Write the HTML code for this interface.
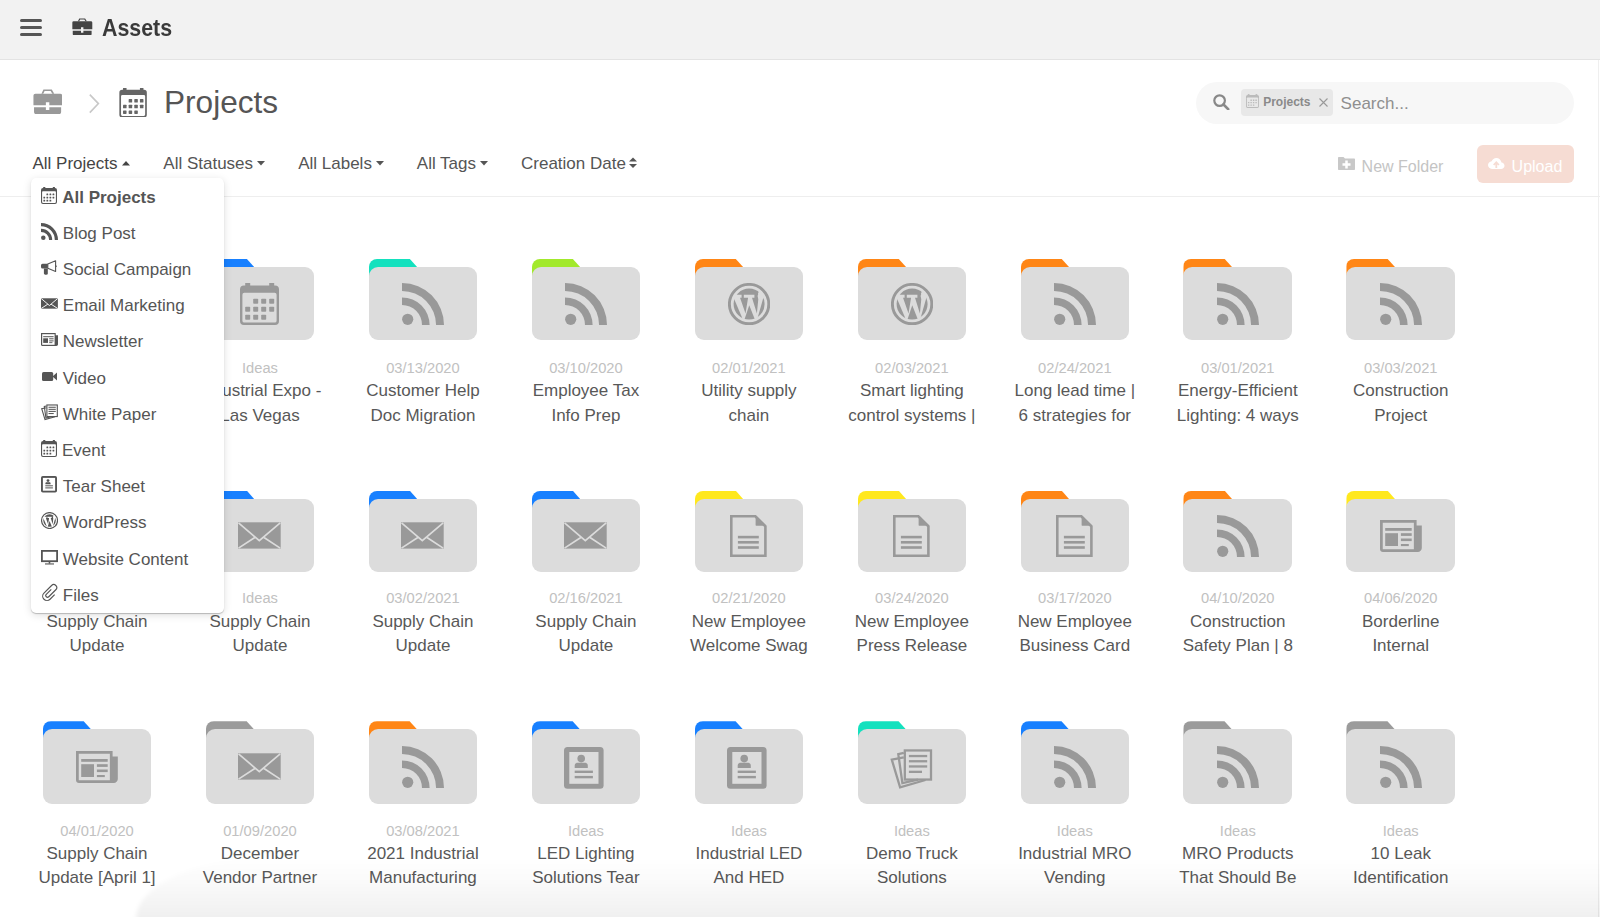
<!DOCTYPE html>
<html><head><meta charset="utf-8"><style>
*{margin:0;padding:0;box-sizing:border-box}
html,body{width:1600px;height:917px;overflow:hidden;background:#fff;font-family:"Liberation Sans",sans-serif;color:#555}
.abs{position:absolute}
#hdr{position:absolute;left:0;top:0;width:1600px;height:60px;background:#f2f2f2;border-bottom:1px solid #e3e3e3}
.it{position:absolute;width:108.6px;height:90px}
.tab{position:absolute;left:0;top:0;width:48.5px;height:20px;border-top-left-radius:8px;clip-path:polygon(0 0,41px 0,48.5px 8.3px,48.5px 100%,0 100%)}
.body{position:absolute;left:0;top:8.3px;width:108.6px;background:#dcdcdc;border-radius:9px}
.ic{position:absolute;line-height:0}
.ic svg{display:block}
.date{position:absolute;width:163px;text-align:center;font-size:14.7px;color:#c1c1c1;line-height:18px}
.title{position:absolute;width:163px;text-align:center;font-size:17px;color:#585858;line-height:24.4px}
</style></head><body>

<div id="hdr"></div>
<div class="abs" style="left:20px;top:19px;width:22.4px;height:3px;border-radius:1.5px;background:#555"></div>
<div class="abs" style="left:20px;top:25.8px;width:22.4px;height:3px;border-radius:1.5px;background:#555"></div>
<div class="abs" style="left:20px;top:32.9px;width:22.4px;height:3px;border-radius:1.5px;background:#555"></div>
<div class="abs" style="left:72.4px;top:17.6px;line-height:0"><svg width="20.6" height="17.8" viewBox="0 0 30 26"><path d="M8.6 4.8L10.6 0.6H19.1L21.6 4.8H19.6L18 2.1H11.8L10.4 4.8Z" fill="#444"/><path d="M2.5 4.7H27.6A2 2 0 0 1 29.6 6.7V16.5H16.6V13.4H13.1V16.5H0.45V6.7A2 2 0 0 1 2.45 4.7Z" fill="#444"/><path d="M1.05 18.5H13.1V21.4H16.6V18.5H28.6V23.3A2.3 2.3 0 0 1 26.3 25.6H3.35A2.3 2.3 0 0 1 1.05 23.3Z" fill="#444"/></svg></div>
<div class="abs" style="left:101.5px;top:16.33px;font-size:24.3px;line-height:24.3px;color:#3a3a3a;font-weight:bold;white-space:nowrap;transform:scaleX(0.88);transform-origin:0 0">Assets</div>
<div class="abs" style="left:32.7px;top:88.5px;line-height:0"><svg width="29.5" height="25.6" viewBox="0 0 30 26"><path d="M8.6 4.8L10.6 0.6H19.1L21.6 4.8H19.6L18 2.1H11.8L10.4 4.8Z" fill="#999"/><path d="M2.5 4.7H27.6A2 2 0 0 1 29.6 6.7V16.5H16.6V13.4H13.1V16.5H0.45V6.7A2 2 0 0 1 2.45 4.7Z" fill="#999"/><path d="M1.05 18.5H13.1V21.4H16.6V18.5H28.6V23.3A2.3 2.3 0 0 1 26.3 25.6H3.35A2.3 2.3 0 0 1 1.05 23.3Z" fill="#999"/></svg></div>
<svg class="abs" style="left:88px;top:93px" width="13" height="21" viewBox="0 0 13 21"><path d="M1.8 1.6L10.4 10.6L1.8 19.6" fill="none" stroke="#c8c8c8" stroke-width="1.6"/></svg>
<div class="abs" style="left:118.7px;top:87.7px;line-height:0"><svg width="28.2" height="29.6" viewBox="0 0 39 42"><rect x="5.2" y="0" width="5" height="5" fill="#666"/><rect x="29.2" y="0" width="5" height="5" fill="#666"/><path d="M4 2.6H35A4 4 0 0 1 39 6.6V38A4 4 0 0 1 35 42H4A4 4 0 0 1 0 38V6.6A4 4 0 0 1 4 2.6Z" fill="#666"/><path d="M4.5 9.8H34.5A2 2 0 0 1 36.6 11.8V37.5A2 2 0 0 1 34.5 39.6H4.5A2 2 0 0 1 2.4 37.5V11.8A2 2 0 0 1 4.5 9.8Z" fill="#fff"/><rect x="13.2" y="15.7" width="5" height="5" rx="0.8" fill="#666"/><rect x="21.2" y="15.7" width="5" height="5" rx="0.8" fill="#666"/><rect x="29.2" y="15.7" width="5" height="5" rx="0.8" fill="#666"/><rect x="5.2" y="23.7" width="5" height="5" rx="0.8" fill="#666"/><rect x="13.2" y="23.7" width="5" height="5" rx="0.8" fill="#666"/><rect x="21.2" y="23.7" width="5" height="5" rx="0.8" fill="#666"/><rect x="29.2" y="23.7" width="5" height="5" rx="0.8" fill="#666"/><rect x="5.2" y="31.8" width="5" height="5" rx="0.8" fill="#666"/><rect x="13.2" y="31.8" width="5" height="5" rx="0.8" fill="#666"/><rect x="21.2" y="31.8" width="5" height="5" rx="0.8" fill="#666"/></svg></div>
<div class="abs" style="left:164px;top:86.75px;font-size:31.6px;line-height:31.6px;color:#555;font-weight:normal;white-space:nowrap;">Projects</div>
<div class="abs" style="left:32.5px;top:155.26px;font-size:17px;line-height:17px;color:#444;font-weight:normal;white-space:nowrap;">All Projects</div>
<div class="abs" style="left:122px;top:160.5px;line-height:0"><svg width="8" height="5" viewBox="0 0 8 5"><path d="M0 4.5H8L4 0Z" fill="#444"/></svg></div>
<div class="abs" style="left:163.3px;top:155.26px;font-size:17px;line-height:17px;color:#555;font-weight:normal;white-space:nowrap;">All Statuses</div>
<div class="abs" style="left:256.6px;top:161px;line-height:0"><svg width="8" height="5" viewBox="0 0 8 5"><path d="M0 0H8L4 4.5Z" fill="#555"/></svg></div>
<div class="abs" style="left:298.2px;top:155.26px;font-size:17px;line-height:17px;color:#555;font-weight:normal;white-space:nowrap;">All Labels</div>
<div class="abs" style="left:376px;top:161px;line-height:0"><svg width="8" height="5" viewBox="0 0 8 5"><path d="M0 0H8L4 4.5Z" fill="#555"/></svg></div>
<div class="abs" style="left:416.8px;top:155.26px;font-size:17px;line-height:17px;color:#555;font-weight:normal;white-space:nowrap;">All Tags</div>
<div class="abs" style="left:480px;top:161px;line-height:0"><svg width="8" height="5" viewBox="0 0 8 5"><path d="M0 0H8L4 4.5Z" fill="#555"/></svg></div>
<div class="abs" style="left:521px;top:155.26px;font-size:17px;line-height:17px;color:#555;font-weight:normal;white-space:nowrap;">Creation Date</div>
<svg class="abs" style="left:629px;top:156px" width="8" height="14" viewBox="0 0 8 14"><path d="M0 5.5H8L4 1.5Z M0 8H8L4 12Z" fill="#555"/></svg>
<div class="abs" style="left:0;top:196px;width:1600px;height:1px;background:#eeeeee"></div>
<div class="abs" style="left:1196px;top:82px;width:378px;height:41.5px;border-radius:21px;background:#f7f7f7"></div>
<svg class="abs" style="left:1212.5px;top:94px" width="17" height="16" viewBox="0 0 17 16"><circle cx="6.6" cy="6.6" r="5.3" fill="none" stroke="#888" stroke-width="2.2"/><path d="M10.5 10.5L15.2 15.2" stroke="#888" stroke-width="2.6" stroke-linecap="round"/></svg>
<div class="abs" style="left:1241px;top:88.5px;width:91.5px;height:27.8px;border-radius:4px;background:#e8e8e8"></div>
<div class="abs" style="left:1245.8px;top:93.7px;line-height:0"><svg width="13" height="14" viewBox="0 0 16 17"><rect x="2.2" y="0" width="2.1" height="2" fill="#bbb"/><rect x="11.8" y="0" width="2.1" height="2" fill="#bbb"/><path d="M2 1.1H14A2 2 0 0 1 16 3.1V15A2 2 0 0 1 14 17H2A2 2 0 0 1 0 15V3.1A2 2 0 0 1 2 1.1Z" fill="#bbb"/><rect x="1.1" y="4.2" width="13.8" height="11.7" rx="0.8" fill="#e8e8e8"/><rect x="5.45" y="6.60" width="1.75" height="1.75" rx="0.3" fill="#bbb"/><rect x="8.50" y="6.60" width="1.75" height="1.75" rx="0.3" fill="#bbb"/><rect x="11.55" y="6.60" width="1.75" height="1.75" rx="0.3" fill="#bbb"/><rect x="2.40" y="9.65" width="1.75" height="1.75" rx="0.3" fill="#bbb"/><rect x="5.45" y="9.65" width="1.75" height="1.75" rx="0.3" fill="#bbb"/><rect x="8.50" y="9.65" width="1.75" height="1.75" rx="0.3" fill="#bbb"/><rect x="11.55" y="9.65" width="1.75" height="1.75" rx="0.3" fill="#bbb"/><rect x="2.40" y="12.70" width="1.75" height="1.75" rx="0.3" fill="#bbb"/><rect x="5.45" y="12.70" width="1.75" height="1.75" rx="0.3" fill="#bbb"/><rect x="8.50" y="12.70" width="1.75" height="1.75" rx="0.3" fill="#bbb"/></svg></div>
<div class="abs" style="left:1263.2px;top:96.49px;font-size:12px;line-height:12px;color:#8a8a8a;font-weight:bold;white-space:nowrap;">Projects</div>
<svg class="abs" style="left:1318.5px;top:98px" width="9" height="9" viewBox="0 0 9 9"><path d="M0.5 0.5L8.5 8.5M8.5 0.5L0.5 8.5" stroke="#999" stroke-width="1.1"/></svg>
<div class="abs" style="left:1340.6px;top:95.11px;font-size:17px;line-height:17px;color:#8f8f8f;font-weight:normal;white-space:nowrap;">Search...</div>
<svg class="abs" style="left:1338px;top:156.5px" width="17" height="13" viewBox="0 0 17 13"><path d="M0 1C0 0.4 0.4 0 1 0H5.5L7 1.6H16C16.6 1.6 17 2 17 2.6V12C17 12.6 16.6 13 16 13H1C0.4 13 0 12.6 0 12Z" fill="#c8c8c8"/><path d="M8.5 3.6V11.6M4.5 7.6H12.5" stroke="#fff" stroke-width="2.5"/></svg>
<div class="abs" style="left:1361.6px;top:158.76px;font-size:16px;line-height:16px;color:#c4c4c4;font-weight:normal;white-space:nowrap;">New Folder</div>
<div class="abs" style="left:1477.2px;top:145.2px;width:97px;height:38px;border-radius:6px;background:#f6dcd3"></div>
<svg class="abs" style="left:1488px;top:157.5px" width="16.5" height="11" viewBox="0 0 16.5 11"><path d="M4 11H13C15 11 16.5 9.6 16.5 7.7C16.5 6 15.2 4.6 13.5 4.5C13 2 10.9 0 8.3 0C6.2 0 4.4 1.3 3.7 3.2C1.6 3.4 0 5.1 0 7.1C0 9.3 1.8 11 4 11Z" fill="#fff"/><path d="M8.3 10V4.6M5.7 7L8.3 4.2L10.9 7" stroke="#f6dcd3" stroke-width="1.8" fill="none"/></svg>
<div class="abs" style="left:1511.6px;top:159.11px;font-size:16px;line-height:16px;color:#fff;font-weight:normal;white-space:nowrap;">Upload</div>

<div class="it" style="left:205.67px;top:258.70px">
<div class="tab" style="background:#1880ff"></div><div class="body" style="height:73.45px"><div class="ic" style="left:34.80px;top:15.73px"><svg width="39" height="42" viewBox="0 0 39 42"><rect x="5.2" y="0" width="5" height="5" fill="#999"/><rect x="29.2" y="0" width="5" height="5" fill="#999"/><path d="M4 2.6H35A4 4 0 0 1 39 6.6V38A4 4 0 0 1 35 42H4A4 4 0 0 1 0 38V6.6A4 4 0 0 1 4 2.6Z" fill="#999"/><path d="M4.5 9.8H34.5A2 2 0 0 1 36.6 11.8V37.5A2 2 0 0 1 34.5 39.6H4.5A2 2 0 0 1 2.4 37.5V11.8A2 2 0 0 1 4.5 9.8Z" fill="#dcdcdc"/><rect x="13.2" y="15.7" width="5" height="5" rx="0.8" fill="#999"/><rect x="21.2" y="15.7" width="5" height="5" rx="0.8" fill="#999"/><rect x="29.2" y="15.7" width="5" height="5" rx="0.8" fill="#999"/><rect x="5.2" y="23.7" width="5" height="5" rx="0.8" fill="#999"/><rect x="13.2" y="23.7" width="5" height="5" rx="0.8" fill="#999"/><rect x="21.2" y="23.7" width="5" height="5" rx="0.8" fill="#999"/><rect x="29.2" y="23.7" width="5" height="5" rx="0.8" fill="#999"/><rect x="5.2" y="31.8" width="5" height="5" rx="0.8" fill="#999"/><rect x="13.2" y="31.8" width="5" height="5" rx="0.8" fill="#999"/><rect x="21.2" y="31.8" width="5" height="5" rx="0.8" fill="#999"/></svg></div></div>
</div>
<div class="date" style="left:178.47px;top:358.95px">Ideas</div><div class="title" style="left:178.47px;top:379.45px">Industrial Expo -<br>Las Vegas</div><div class="it" style="left:368.64px;top:258.70px">
<div class="tab" style="background:#14e1be"></div><div class="body" style="height:73.45px"><div class="ic" style="left:33.30px;top:15.73px"><svg width="42" height="42" viewBox="0 0 42 42"><circle cx="5.7" cy="36.3" r="5.6" fill="#999"/><path d="M0 14.4A27.6 27.6 0 0 1 27.6 42H20A20 20 0 0 0 0 22Z" fill="#999"/><path d="M0 0A42 42 0 0 1 42 42H34.1A34.1 34.1 0 0 0 0 7.9Z" fill="#999"/></svg></div></div>
</div>
<div class="date" style="left:341.44px;top:358.95px">03/13/2020</div><div class="title" style="left:341.44px;top:379.45px">Customer Help<br>Doc Migration</div><div class="it" style="left:531.61px;top:258.70px">
<div class="tab" style="background:#a2e92c"></div><div class="body" style="height:73.45px"><div class="ic" style="left:33.30px;top:15.73px"><svg width="42" height="42" viewBox="0 0 42 42"><circle cx="5.7" cy="36.3" r="5.6" fill="#999"/><path d="M0 14.4A27.6 27.6 0 0 1 27.6 42H20A20 20 0 0 0 0 22Z" fill="#999"/><path d="M0 0A42 42 0 0 1 42 42H34.1A34.1 34.1 0 0 0 0 7.9Z" fill="#999"/></svg></div></div>
</div>
<div class="date" style="left:504.41px;top:358.95px">03/10/2020</div><div class="title" style="left:504.41px;top:379.45px">Employee Tax<br>Info Prep</div><div class="it" style="left:694.58px;top:258.70px">
<div class="tab" style="background:#ff8616"></div><div class="body" style="height:73.45px"><div class="ic" style="left:33.30px;top:15.73px"><svg width="42" height="42" viewBox="0 0 42 42"><defs><clipPath id="wpc1"><circle cx="21.1" cy="21.1" r="15.5"/></clipPath></defs><circle cx="21.1" cy="21.1" r="19.7" stroke="#999" stroke-width="2.9" fill="none"/><g clip-path="url(#wpc1)" fill="#999"><path d="M0 0H42V7L30.8 8.6L29.6 11.8H0Z"/><path d="M0 8H2.82L17.18 42H0Z"/><path d="M12.03 14.74H13.6V11H15.8V14.74H20.07L17.52 30.44Z"/><path d="M21.25 22.2L29.06 42H14.64Z"/><path d="M24 14.74H26.4V11H30.2L29.6 13L30.28 16.31L28.9 30.44Z"/><path d="M37.32 8H42V42H27.59Z"/></g></svg></div></div>
</div>
<div class="date" style="left:667.38px;top:358.95px">02/01/2021</div><div class="title" style="left:667.38px;top:379.45px">Utility supply<br>chain</div><div class="it" style="left:857.55px;top:258.70px">
<div class="tab" style="background:#ff8616"></div><div class="body" style="height:73.45px"><div class="ic" style="left:33.30px;top:15.73px"><svg width="42" height="42" viewBox="0 0 42 42"><defs><clipPath id="wpc2"><circle cx="21.1" cy="21.1" r="15.5"/></clipPath></defs><circle cx="21.1" cy="21.1" r="19.7" stroke="#999" stroke-width="2.9" fill="none"/><g clip-path="url(#wpc2)" fill="#999"><path d="M0 0H42V7L30.8 8.6L29.6 11.8H0Z"/><path d="M0 8H2.82L17.18 42H0Z"/><path d="M12.03 14.74H13.6V11H15.8V14.74H20.07L17.52 30.44Z"/><path d="M21.25 22.2L29.06 42H14.64Z"/><path d="M24 14.74H26.4V11H30.2L29.6 13L30.28 16.31L28.9 30.44Z"/><path d="M37.32 8H42V42H27.59Z"/></g></svg></div></div>
</div>
<div class="date" style="left:830.35px;top:358.95px">02/03/2021</div><div class="title" style="left:830.35px;top:379.45px">Smart lighting<br>control systems |</div><div class="it" style="left:1020.52px;top:258.70px">
<div class="tab" style="background:#ff8616"></div><div class="body" style="height:73.45px"><div class="ic" style="left:33.30px;top:15.73px"><svg width="42" height="42" viewBox="0 0 42 42"><circle cx="5.7" cy="36.3" r="5.6" fill="#999"/><path d="M0 14.4A27.6 27.6 0 0 1 27.6 42H20A20 20 0 0 0 0 22Z" fill="#999"/><path d="M0 0A42 42 0 0 1 42 42H34.1A34.1 34.1 0 0 0 0 7.9Z" fill="#999"/></svg></div></div>
</div>
<div class="date" style="left:993.32px;top:358.95px">02/24/2021</div><div class="title" style="left:993.32px;top:379.45px">Long lead time |<br>6 strategies for</div><div class="it" style="left:1183.49px;top:258.70px">
<div class="tab" style="background:#ff8616"></div><div class="body" style="height:73.45px"><div class="ic" style="left:33.30px;top:15.73px"><svg width="42" height="42" viewBox="0 0 42 42"><circle cx="5.7" cy="36.3" r="5.6" fill="#999"/><path d="M0 14.4A27.6 27.6 0 0 1 27.6 42H20A20 20 0 0 0 0 22Z" fill="#999"/><path d="M0 0A42 42 0 0 1 42 42H34.1A34.1 34.1 0 0 0 0 7.9Z" fill="#999"/></svg></div></div>
</div>
<div class="date" style="left:1156.29px;top:358.95px">03/01/2021</div><div class="title" style="left:1156.29px;top:379.45px">Energy-Efficient<br>Lighting: 4 ways</div><div class="it" style="left:1346.46px;top:258.70px">
<div class="tab" style="background:#ff8616"></div><div class="body" style="height:73.45px"><div class="ic" style="left:33.30px;top:15.73px"><svg width="42" height="42" viewBox="0 0 42 42"><circle cx="5.7" cy="36.3" r="5.6" fill="#999"/><path d="M0 14.4A27.6 27.6 0 0 1 27.6 42H20A20 20 0 0 0 0 22Z" fill="#999"/><path d="M0 0A42 42 0 0 1 42 42H34.1A34.1 34.1 0 0 0 0 7.9Z" fill="#999"/></svg></div></div>
</div>
<div class="date" style="left:1319.26px;top:358.95px">03/03/2021</div><div class="title" style="left:1319.26px;top:379.45px">Construction<br>Project</div><div class="it" style="left:42.70px;top:490.60px">
<div class="tab" style="background:#1880ff"></div><div class="body" style="height:73.25px"><div class="ic" style="left:32.80px;top:23.12px"><svg width="43" height="27" viewBox="0 0 43 27"><rect x="0" y="0.3" width="42.7" height="26.3" fill="#999"/><path d="M0.5 0.8L21.3 18.6L42.2 0.8M0.5 26.1L17.2 15.3M42.2 26.1L25.6 15.3" stroke="#dcdcdc" stroke-width="1.7" fill="none"/></svg></div></div>
</div>
<div class="date" style="left:15.50px;top:589.45px">Ideas</div><div class="title" style="left:15.50px;top:609.95px">Supply Chain<br>Update</div><div class="it" style="left:205.67px;top:490.60px">
<div class="tab" style="background:#1880ff"></div><div class="body" style="height:73.25px"><div class="ic" style="left:32.80px;top:23.12px"><svg width="43" height="27" viewBox="0 0 43 27"><rect x="0" y="0.3" width="42.7" height="26.3" fill="#999"/><path d="M0.5 0.8L21.3 18.6L42.2 0.8M0.5 26.1L17.2 15.3M42.2 26.1L25.6 15.3" stroke="#dcdcdc" stroke-width="1.7" fill="none"/></svg></div></div>
</div>
<div class="date" style="left:178.47px;top:589.45px">Ideas</div><div class="title" style="left:178.47px;top:609.95px">Supply Chain<br>Update</div><div class="it" style="left:368.64px;top:490.60px">
<div class="tab" style="background:#1880ff"></div><div class="body" style="height:73.25px"><div class="ic" style="left:32.80px;top:23.12px"><svg width="43" height="27" viewBox="0 0 43 27"><rect x="0" y="0.3" width="42.7" height="26.3" fill="#999"/><path d="M0.5 0.8L21.3 18.6L42.2 0.8M0.5 26.1L17.2 15.3M42.2 26.1L25.6 15.3" stroke="#dcdcdc" stroke-width="1.7" fill="none"/></svg></div></div>
</div>
<div class="date" style="left:341.44px;top:589.45px">03/02/2021</div><div class="title" style="left:341.44px;top:609.95px">Supply Chain<br>Update</div><div class="it" style="left:531.61px;top:490.60px">
<div class="tab" style="background:#1880ff"></div><div class="body" style="height:73.25px"><div class="ic" style="left:32.80px;top:23.12px"><svg width="43" height="27" viewBox="0 0 43 27"><rect x="0" y="0.3" width="42.7" height="26.3" fill="#999"/><path d="M0.5 0.8L21.3 18.6L42.2 0.8M0.5 26.1L17.2 15.3M42.2 26.1L25.6 15.3" stroke="#dcdcdc" stroke-width="1.7" fill="none"/></svg></div></div>
</div>
<div class="date" style="left:504.41px;top:589.45px">02/16/2021</div><div class="title" style="left:504.41px;top:609.95px">Supply Chain<br>Update</div><div class="it" style="left:694.58px;top:490.60px">
<div class="tab" style="background:#ffe81e"></div><div class="body" style="height:73.25px"><div class="ic" style="left:35.80px;top:15.62px"><svg width="37" height="42" viewBox="0 0 37 42"><path d="M1.3 1.3H25.4L35.4 11.3V40.7H1.3Z" stroke="#999" stroke-width="2.6" fill="none"/><path d="M26 1.3V10.5H35.4" fill="#999"/><path d="M25.6 0.5V10.6H36.2Z" fill="#999"/><rect x="7.9" y="20.8" width="20.9" height="2.6" fill="#999"/><rect x="7.9" y="26" width="20.9" height="2.6" fill="#999"/><rect x="7.9" y="31.2" width="20.9" height="2.6" fill="#999"/></svg></div></div>
</div>
<div class="date" style="left:667.38px;top:589.45px">02/21/2020</div><div class="title" style="left:667.38px;top:609.95px">New Employee<br>Welcome Swag</div><div class="it" style="left:857.55px;top:490.60px">
<div class="tab" style="background:#ffe81e"></div><div class="body" style="height:73.25px"><div class="ic" style="left:35.80px;top:15.62px"><svg width="37" height="42" viewBox="0 0 37 42"><path d="M1.3 1.3H25.4L35.4 11.3V40.7H1.3Z" stroke="#999" stroke-width="2.6" fill="none"/><path d="M26 1.3V10.5H35.4" fill="#999"/><path d="M25.6 0.5V10.6H36.2Z" fill="#999"/><rect x="7.9" y="20.8" width="20.9" height="2.6" fill="#999"/><rect x="7.9" y="26" width="20.9" height="2.6" fill="#999"/><rect x="7.9" y="31.2" width="20.9" height="2.6" fill="#999"/></svg></div></div>
</div>
<div class="date" style="left:830.35px;top:589.45px">03/24/2020</div><div class="title" style="left:830.35px;top:609.95px">New Employee<br>Press Release</div><div class="it" style="left:1020.52px;top:490.60px">
<div class="tab" style="background:#ff8616"></div><div class="body" style="height:73.25px"><div class="ic" style="left:35.80px;top:15.62px"><svg width="37" height="42" viewBox="0 0 37 42"><path d="M1.3 1.3H25.4L35.4 11.3V40.7H1.3Z" stroke="#999" stroke-width="2.6" fill="none"/><path d="M26 1.3V10.5H35.4" fill="#999"/><path d="M25.6 0.5V10.6H36.2Z" fill="#999"/><rect x="7.9" y="20.8" width="20.9" height="2.6" fill="#999"/><rect x="7.9" y="26" width="20.9" height="2.6" fill="#999"/><rect x="7.9" y="31.2" width="20.9" height="2.6" fill="#999"/></svg></div></div>
</div>
<div class="date" style="left:993.32px;top:589.45px">03/17/2020</div><div class="title" style="left:993.32px;top:609.95px">New Employee<br>Business Card</div><div class="it" style="left:1183.49px;top:490.60px">
<div class="tab" style="background:#ff8616"></div><div class="body" style="height:73.25px"><div class="ic" style="left:33.30px;top:15.62px"><svg width="42" height="42" viewBox="0 0 42 42"><circle cx="5.7" cy="36.3" r="5.6" fill="#999"/><path d="M0 14.4A27.6 27.6 0 0 1 27.6 42H20A20 20 0 0 0 0 22Z" fill="#999"/><path d="M0 0A42 42 0 0 1 42 42H34.1A34.1 34.1 0 0 0 0 7.9Z" fill="#999"/></svg></div></div>
</div>
<div class="date" style="left:1156.29px;top:589.45px">04/10/2020</div><div class="title" style="left:1156.29px;top:609.95px">Construction<br>Safety Plan | 8</div><div class="it" style="left:1346.46px;top:490.60px">
<div class="tab" style="background:#ffe81e"></div><div class="body" style="height:73.25px"><div class="ic" style="left:33.30px;top:20.62px"><svg width="42" height="32" viewBox="0 0 42 32"><path d="M36.6 5.4H41.8V28C41.8 30.2 40 32 37.8 32H3C1.3 32 0 30.7 0 29V0H36.6Z" fill="#999"/><rect x="2.75" y="2.75" width="31.1" height="26.5" fill="#dcdcdc"/><rect x="5.2" y="8" width="26.5" height="2.8" fill="#999"/><rect x="5.2" y="13.2" width="12.8" height="12.8" fill="#999"/><rect x="20.9" y="13.2" width="10.8" height="2.7" fill="#999"/><rect x="20.9" y="18.5" width="10.8" height="2.6" fill="#999"/><rect x="20.9" y="24" width="7.9" height="2.1" fill="#999"/></svg></div></div>
</div>
<div class="date" style="left:1319.26px;top:589.45px">04/06/2020</div><div class="title" style="left:1319.26px;top:609.95px">Borderline<br>Internal</div><div class="it" style="left:42.70px;top:721.20px">
<div class="tab" style="background:#1880ff"></div><div class="body" style="height:74.6px"><div class="ic" style="left:33.30px;top:21.30px"><svg width="42" height="32" viewBox="0 0 42 32"><path d="M36.6 5.4H41.8V28C41.8 30.2 40 32 37.8 32H3C1.3 32 0 30.7 0 29V0H36.6Z" fill="#999"/><rect x="2.75" y="2.75" width="31.1" height="26.5" fill="#dcdcdc"/><rect x="5.2" y="8" width="26.5" height="2.8" fill="#999"/><rect x="5.2" y="13.2" width="12.8" height="12.8" fill="#999"/><rect x="20.9" y="13.2" width="10.8" height="2.7" fill="#999"/><rect x="20.9" y="18.5" width="10.8" height="2.6" fill="#999"/><rect x="20.9" y="24" width="7.9" height="2.1" fill="#999"/></svg></div></div>
</div>
<div class="date" style="left:15.50px;top:821.55px">04/01/2020</div><div class="title" style="left:15.50px;top:842.05px">Supply Chain<br>Update [April 1]</div><div class="it" style="left:205.67px;top:721.20px">
<div class="tab" style="background:#9b9b9b"></div><div class="body" style="height:74.6px"><div class="ic" style="left:32.80px;top:23.80px"><svg width="43" height="27" viewBox="0 0 43 27"><rect x="0" y="0.3" width="42.7" height="26.3" fill="#999"/><path d="M0.5 0.8L21.3 18.6L42.2 0.8M0.5 26.1L17.2 15.3M42.2 26.1L25.6 15.3" stroke="#dcdcdc" stroke-width="1.7" fill="none"/></svg></div></div>
</div>
<div class="date" style="left:178.47px;top:821.55px">01/09/2020</div><div class="title" style="left:178.47px;top:842.05px">December<br>Vendor Partner</div><div class="it" style="left:368.64px;top:721.20px">
<div class="tab" style="background:#ff8616"></div><div class="body" style="height:74.6px"><div class="ic" style="left:33.30px;top:16.30px"><svg width="42" height="42" viewBox="0 0 42 42"><circle cx="5.7" cy="36.3" r="5.6" fill="#999"/><path d="M0 14.4A27.6 27.6 0 0 1 27.6 42H20A20 20 0 0 0 0 22Z" fill="#999"/><path d="M0 0A42 42 0 0 1 42 42H34.1A34.1 34.1 0 0 0 0 7.9Z" fill="#999"/></svg></div></div>
</div>
<div class="date" style="left:341.44px;top:821.55px">03/08/2021</div><div class="title" style="left:341.44px;top:842.05px">2021 Industrial<br>Manufacturing</div><div class="it" style="left:531.61px;top:721.20px">
<div class="tab" style="background:#1880ff"></div><div class="body" style="height:74.6px"><div class="ic" style="left:32.80px;top:17.20px"><svg width="40" height="42" viewBox="0 0 40 42"><rect x="0" y="0" width="39.6" height="41.8" rx="3.5" fill="#999"/><rect x="5.3" y="5" width="29.2" height="31.8" fill="#dcdcdc"/><circle cx="17.2" cy="11.6" r="3.8" fill="#999"/><path d="M10.7 21V18.5C10.7 16.8 12 15.8 13.7 15.8H20.8C22.5 15.8 23.8 16.8 23.8 18.5V21Z" fill="#999"/><rect x="10.7" y="23.6" width="18.2" height="2.4" fill="#999"/><rect x="10.7" y="28.9" width="18.2" height="2.4" fill="#999"/></svg></div></div>
</div>
<div class="date" style="left:504.41px;top:821.55px">Ideas</div><div class="title" style="left:504.41px;top:842.05px">LED Lighting<br>Solutions Tear</div><div class="it" style="left:694.58px;top:721.20px">
<div class="tab" style="background:#1880ff"></div><div class="body" style="height:74.6px"><div class="ic" style="left:32.80px;top:17.20px"><svg width="40" height="42" viewBox="0 0 40 42"><rect x="0" y="0" width="39.6" height="41.8" rx="3.5" fill="#999"/><rect x="5.3" y="5" width="29.2" height="31.8" fill="#dcdcdc"/><circle cx="17.2" cy="11.6" r="3.8" fill="#999"/><path d="M10.7 21V18.5C10.7 16.8 12 15.8 13.7 15.8H20.8C22.5 15.8 23.8 16.8 23.8 18.5V21Z" fill="#999"/><rect x="10.7" y="23.6" width="18.2" height="2.4" fill="#999"/><rect x="10.7" y="28.9" width="18.2" height="2.4" fill="#999"/></svg></div></div>
</div>
<div class="date" style="left:667.38px;top:821.55px">Ideas</div><div class="title" style="left:667.38px;top:842.05px">Industrial LED<br>And HED</div><div class="it" style="left:857.55px;top:721.20px">
<div class="tab" style="background:#14e1be"></div><div class="body" style="height:74.6px"><div class="ic" style="left:31.30px;top:15.30px"><svg width="46" height="46" viewBox="-2 -2 46 46"><g fill="none" stroke="#999" stroke-width="2.3" stroke-linejoin="miter"><path d="M12.8 10.3L0.8 12.7L9.1 40.3L34.5 33"/><path d="M12.8 5.9L7.3 7.2L11.4 36.1L27 32.6"/><rect x="13.83" y="3.45" width="26.17" height="29.1"/></g><rect x="17.9" y="7.9" width="18.3" height="2.3" fill="#999"/><rect x="17.9" y="13.1" width="18.3" height="2.3" fill="#999"/><rect x="17.9" y="18.3" width="18.3" height="2.3" fill="#999"/><rect x="17.9" y="23.7" width="13.1" height="2.3" fill="#999"/></svg></div></div>
</div>
<div class="date" style="left:830.35px;top:821.55px">Ideas</div><div class="title" style="left:830.35px;top:842.05px">Demo Truck<br>Solutions</div><div class="it" style="left:1020.52px;top:721.20px">
<div class="tab" style="background:#1880ff"></div><div class="body" style="height:74.6px"><div class="ic" style="left:33.30px;top:16.30px"><svg width="42" height="42" viewBox="0 0 42 42"><circle cx="5.7" cy="36.3" r="5.6" fill="#999"/><path d="M0 14.4A27.6 27.6 0 0 1 27.6 42H20A20 20 0 0 0 0 22Z" fill="#999"/><path d="M0 0A42 42 0 0 1 42 42H34.1A34.1 34.1 0 0 0 0 7.9Z" fill="#999"/></svg></div></div>
</div>
<div class="date" style="left:993.32px;top:821.55px">Ideas</div><div class="title" style="left:993.32px;top:842.05px">Industrial MRO<br>Vending</div><div class="it" style="left:1183.49px;top:721.20px">
<div class="tab" style="background:#9b9b9b"></div><div class="body" style="height:74.6px"><div class="ic" style="left:33.30px;top:16.30px"><svg width="42" height="42" viewBox="0 0 42 42"><circle cx="5.7" cy="36.3" r="5.6" fill="#999"/><path d="M0 14.4A27.6 27.6 0 0 1 27.6 42H20A20 20 0 0 0 0 22Z" fill="#999"/><path d="M0 0A42 42 0 0 1 42 42H34.1A34.1 34.1 0 0 0 0 7.9Z" fill="#999"/></svg></div></div>
</div>
<div class="date" style="left:1156.29px;top:821.55px">Ideas</div><div class="title" style="left:1156.29px;top:842.05px">MRO Products<br>That Should Be</div><div class="it" style="left:1346.46px;top:721.20px">
<div class="tab" style="background:#9b9b9b"></div><div class="body" style="height:74.6px"><div class="ic" style="left:33.30px;top:16.30px"><svg width="42" height="42" viewBox="0 0 42 42"><circle cx="5.7" cy="36.3" r="5.6" fill="#999"/><path d="M0 14.4A27.6 27.6 0 0 1 27.6 42H20A20 20 0 0 0 0 22Z" fill="#999"/><path d="M0 0A42 42 0 0 1 42 42H34.1A34.1 34.1 0 0 0 0 7.9Z" fill="#999"/></svg></div></div>
</div>
<div class="date" style="left:1319.26px;top:821.55px">Ideas</div><div class="title" style="left:1319.26px;top:842.05px">10 Leak<br>Identification</div>
<div class="abs" style="left:30.8px;top:178.2px;width:193.4px;height:435.3px;background:#fff;border-radius:5px;box-shadow:0 1px 1px rgba(0,0,0,0.22),0 2px 9px rgba(0,0,0,0.13)"></div>
<div class="abs" style="left:41.1px;top:186.7px;line-height:0"><svg width="16" height="17" viewBox="0 0 16 17"><rect x="2.2" y="0" width="2.1" height="2" fill="#555"/><rect x="11.8" y="0" width="2.1" height="2" fill="#555"/><path d="M2 1.1H14A2 2 0 0 1 16 3.1V15A2 2 0 0 1 14 17H2A2 2 0 0 1 0 15V3.1A2 2 0 0 1 2 1.1Z" fill="#555"/><rect x="1.1" y="4.2" width="13.8" height="11.7" rx="0.8" fill="#fff"/><rect x="5.45" y="6.60" width="1.75" height="1.75" rx="0.3" fill="#555"/><rect x="8.50" y="6.60" width="1.75" height="1.75" rx="0.3" fill="#555"/><rect x="11.55" y="6.60" width="1.75" height="1.75" rx="0.3" fill="#555"/><rect x="2.40" y="9.65" width="1.75" height="1.75" rx="0.3" fill="#555"/><rect x="5.45" y="9.65" width="1.75" height="1.75" rx="0.3" fill="#555"/><rect x="8.50" y="9.65" width="1.75" height="1.75" rx="0.3" fill="#555"/><rect x="11.55" y="9.65" width="1.75" height="1.75" rx="0.3" fill="#555"/><rect x="2.40" y="12.70" width="1.75" height="1.75" rx="0.3" fill="#555"/><rect x="5.45" y="12.70" width="1.75" height="1.75" rx="0.3" fill="#555"/><rect x="8.50" y="12.70" width="1.75" height="1.75" rx="0.3" fill="#555"/></svg></div><div class="abs" style="left:62.2px;top:188.81px;font-size:17px;line-height:17px;color:#555;font-weight:bold;white-space:nowrap;">All Projects</div><div class="abs" style="left:41.1px;top:222.9px;line-height:0"><svg width="17" height="17" viewBox="0 0 42 42"><circle cx="5.7" cy="36.3" r="5.6" fill="#555"/><path d="M0 14.4A27.6 27.6 0 0 1 27.6 42H20A20 20 0 0 0 0 22Z" fill="#555"/><path d="M0 0A42 42 0 0 1 42 42H34.1A34.1 34.1 0 0 0 0 7.9Z" fill="#555"/></svg></div><div class="abs" style="left:62.8px;top:224.98px;font-size:17px;line-height:17px;color:#555;font-weight:normal;white-space:nowrap;">Blog Post</div><div class="abs" style="left:41.1px;top:260.2px;line-height:0"><svg width="17" height="15" viewBox="0 0 17 15"><path d="M1.5 3.8H6.8V8.6H1.5A1.5 1.5 0 0 1 0 7.1V5.3A1.5 1.5 0 0 1 1.5 3.8Z" fill="#555"/><path d="M2.9 8.6H6.8V13.5C6.8 14.3 6.2 14.7 5.4 14.7H4.3C3.5 14.7 2.9 14.1 2.9 13.3Z" fill="#555"/><path d="M6.8 4.1L14.6 0.7V11.5L6.8 8.3Z" fill="none" stroke="#555" stroke-width="1.1" stroke-linejoin="round"/><path d="M14.6 4.8L16 6.3L14.6 7.6Z" fill="#555"/></svg></div><div class="abs" style="left:62.8px;top:261.15px;font-size:17px;line-height:17px;color:#555;font-weight:normal;white-space:nowrap;">Social Campaign</div><div class="abs" style="left:41.1px;top:298.1px;line-height:0"><svg width="17" height="11" viewBox="0 0 43 27"><rect x="0" y="0.3" width="42.7" height="26.3" fill="#555"/><path d="M0.5 0.8L21.3 18.6L42.2 0.8M0.5 26.1L17.2 15.3M42.2 26.1L25.6 15.3" stroke="#fff" stroke-width="2.4" fill="none"/></svg></div><div class="abs" style="left:62.8px;top:297.32px;font-size:17px;line-height:17px;color:#555;font-weight:normal;white-space:nowrap;">Email Marketing</div><div class="abs" style="left:41.1px;top:333.2px;line-height:0"><svg width="17" height="13" viewBox="0 0 17 13"><path d="M14.7 2.3H17V11.3C17 12.2 16.3 13 15.3 13H1.2C0.5 13 0 12.5 0 11.8V0H14.7Z" fill="#555"/><rect x="1.2" y="1.2" width="12.4" height="10.6" fill="#fff"/><rect x="2.2" y="3.2" width="10.4" height="1" fill="#555"/><rect x="2.2" y="5.3" width="4.8" height="4.6" fill="#555"/><rect x="8.2" y="5.3" width="4.4" height="1" fill="#555"/><rect x="8.2" y="7.4" width="4.4" height="1" fill="#555"/><rect x="8.2" y="9.2" width="3.2" height="0.9" fill="#555"/></svg></div><div class="abs" style="left:62.8px;top:333.49px;font-size:17px;line-height:17px;color:#555;font-weight:normal;white-space:nowrap;">Newsletter</div><div class="abs" style="left:42.2px;top:372.0px;line-height:0"><svg width="15" height="9" viewBox="0 0 15 9"><rect x="0" y="0" width="11.2" height="9" rx="1.6" fill="#555"/><path d="M10.5 4.5L15 0.6V8.4Z" fill="#555"/></svg></div><div class="abs" style="left:62.8px;top:369.66px;font-size:17px;line-height:17px;color:#555;font-weight:normal;white-space:nowrap;">Video</div><div class="abs" style="left:41.1px;top:403.5px;line-height:0"><svg width="17.5" height="17.5" viewBox="-1 1 44 44"><g fill="none" stroke="#555" stroke-width="2.8"><path d="M12.8 10.3L0.8 12.7L9.1 40.3L34.5 33"/><path d="M12.8 5.9L7.3 7.2L11.4 36.1L27 32.6"/><rect x="13.83" y="3.45" width="26.17" height="29.1"/></g><rect x="17.9" y="7.9" width="18.3" height="2.6" fill="#555"/><rect x="17.9" y="13.1" width="18.3" height="2.6" fill="#555"/><rect x="17.9" y="18.3" width="18.3" height="2.6" fill="#555"/><rect x="17.9" y="23.7" width="13.1" height="2.6" fill="#555"/></svg></div><div class="abs" style="left:62.8px;top:405.83px;font-size:17px;line-height:17px;color:#555;font-weight:normal;white-space:nowrap;">White Paper</div><div class="abs" style="left:41.1px;top:440.0px;line-height:0"><svg width="16" height="17" viewBox="0 0 16 17"><rect x="2.2" y="0" width="2.1" height="2" fill="#555"/><rect x="11.8" y="0" width="2.1" height="2" fill="#555"/><path d="M2 1.1H14A2 2 0 0 1 16 3.1V15A2 2 0 0 1 14 17H2A2 2 0 0 1 0 15V3.1A2 2 0 0 1 2 1.1Z" fill="#555"/><rect x="1.1" y="4.2" width="13.8" height="11.7" rx="0.8" fill="#fff"/><rect x="5.45" y="6.60" width="1.75" height="1.75" rx="0.3" fill="#555"/><rect x="8.50" y="6.60" width="1.75" height="1.75" rx="0.3" fill="#555"/><rect x="11.55" y="6.60" width="1.75" height="1.75" rx="0.3" fill="#555"/><rect x="2.40" y="9.65" width="1.75" height="1.75" rx="0.3" fill="#555"/><rect x="5.45" y="9.65" width="1.75" height="1.75" rx="0.3" fill="#555"/><rect x="8.50" y="9.65" width="1.75" height="1.75" rx="0.3" fill="#555"/><rect x="11.55" y="9.65" width="1.75" height="1.75" rx="0.3" fill="#555"/><rect x="2.40" y="12.70" width="1.75" height="1.75" rx="0.3" fill="#555"/><rect x="5.45" y="12.70" width="1.75" height="1.75" rx="0.3" fill="#555"/><rect x="8.50" y="12.70" width="1.75" height="1.75" rx="0.3" fill="#555"/></svg></div><div class="abs" style="left:62px;top:442.00px;font-size:17px;line-height:17px;color:#555;font-weight:normal;white-space:nowrap;">Event</div><div class="abs" style="left:41.1px;top:476.2px;line-height:0"><svg width="16" height="17" viewBox="0 0 16 17"><rect x="0" y="0" width="16" height="16.6" rx="1.8" fill="#555"/><rect x="1.9" y="1.9" width="12.2" height="12.8" fill="#fff"/><circle cx="7" cy="4.6" r="1.4" fill="#555"/><path d="M4.4 8.3V7.4C4.4 6.8 4.9 6.3 5.5 6.3H8.5C9.1 6.3 9.6 6.8 9.6 7.4V8.3Z" fill="#555"/><rect x="4.3" y="9.3" width="7.6" height="1" fill="#555"/><rect x="4.3" y="11.4" width="7.6" height="1" fill="#555"/></svg></div><div class="abs" style="left:62.8px;top:478.17px;font-size:17px;line-height:17px;color:#555;font-weight:normal;white-space:nowrap;">Tear Sheet</div><div class="abs" style="left:41.1px;top:512.4px;line-height:0"><svg width="17" height="17" viewBox="0 0 42 42"><defs><clipPath id="wpc3"><circle cx="21.1" cy="21.1" r="15.5"/></clipPath></defs><circle cx="21.1" cy="21.1" r="19.7" stroke="#555" stroke-width="2.9" fill="none"/><g clip-path="url(#wpc3)" fill="#555"><path d="M0 0H42V7L30.8 8.6L29.6 11.8H0Z"/><path d="M0 8H2.82L17.18 42H0Z"/><path d="M12.03 14.74H13.6V11H15.8V14.74H20.07L17.52 30.44Z"/><path d="M21.25 22.2L29.06 42H14.64Z"/><path d="M24 14.74H26.4V11H30.2L29.6 13L30.28 16.31L28.9 30.44Z"/><path d="M37.32 8H42V42H27.59Z"/></g></svg></div><div class="abs" style="left:62.8px;top:514.34px;font-size:17px;line-height:17px;color:#555;font-weight:normal;white-space:nowrap;">WordPress</div><div class="abs" style="left:41.1px;top:549.9px;line-height:0"><svg width="17" height="15" viewBox="0 0 17 15"><rect x="0.9" y="0.9" width="15.2" height="10.3" fill="none" stroke="#555" stroke-width="1.8"/><rect x="7.7" y="12" width="1.6" height="1.6" fill="#555"/><rect x="4" y="13.4" width="9" height="1.1" fill="#555"/></svg></div><div class="abs" style="left:62.8px;top:550.51px;font-size:17px;line-height:17px;color:#555;font-weight:normal;white-space:nowrap;">Website Content</div><div class="abs" style="left:38px;top:580.0px;line-height:0"><svg width="20" height="24" viewBox="0 0 20 24"><path transform="translate(9 16.2) rotate(-45)" d="M6.5 4.3L0 4.3A4.3 4.3 0 0 1 0 -4.3L10.8 -4.3A2.98 2.98 0 0 1 10.8 1.66L0.85 1.65A1.75 1.75 0 0 1 0.85 -1.85L7.9 -1.85" fill="none" stroke="#555" stroke-width="1.15"/></svg></div><div class="abs" style="left:62.8px;top:586.68px;font-size:17px;line-height:17px;color:#555;font-weight:normal;white-space:nowrap;">Files</div>
<div class="abs" style="left:1598px;top:60px;width:1px;height:857px;background:#efefef"></div>
<div class="abs" style="left:136px;top:857px;width:1520px;height:90px;border-top-left-radius:140px 62px;background:linear-gradient(to bottom,rgba(0,0,0,0) 0px,rgba(0,0,0,0.018) 25px,rgba(0,0,0,0.06) 60px);filter:blur(2px)"></div>
</body></html>
